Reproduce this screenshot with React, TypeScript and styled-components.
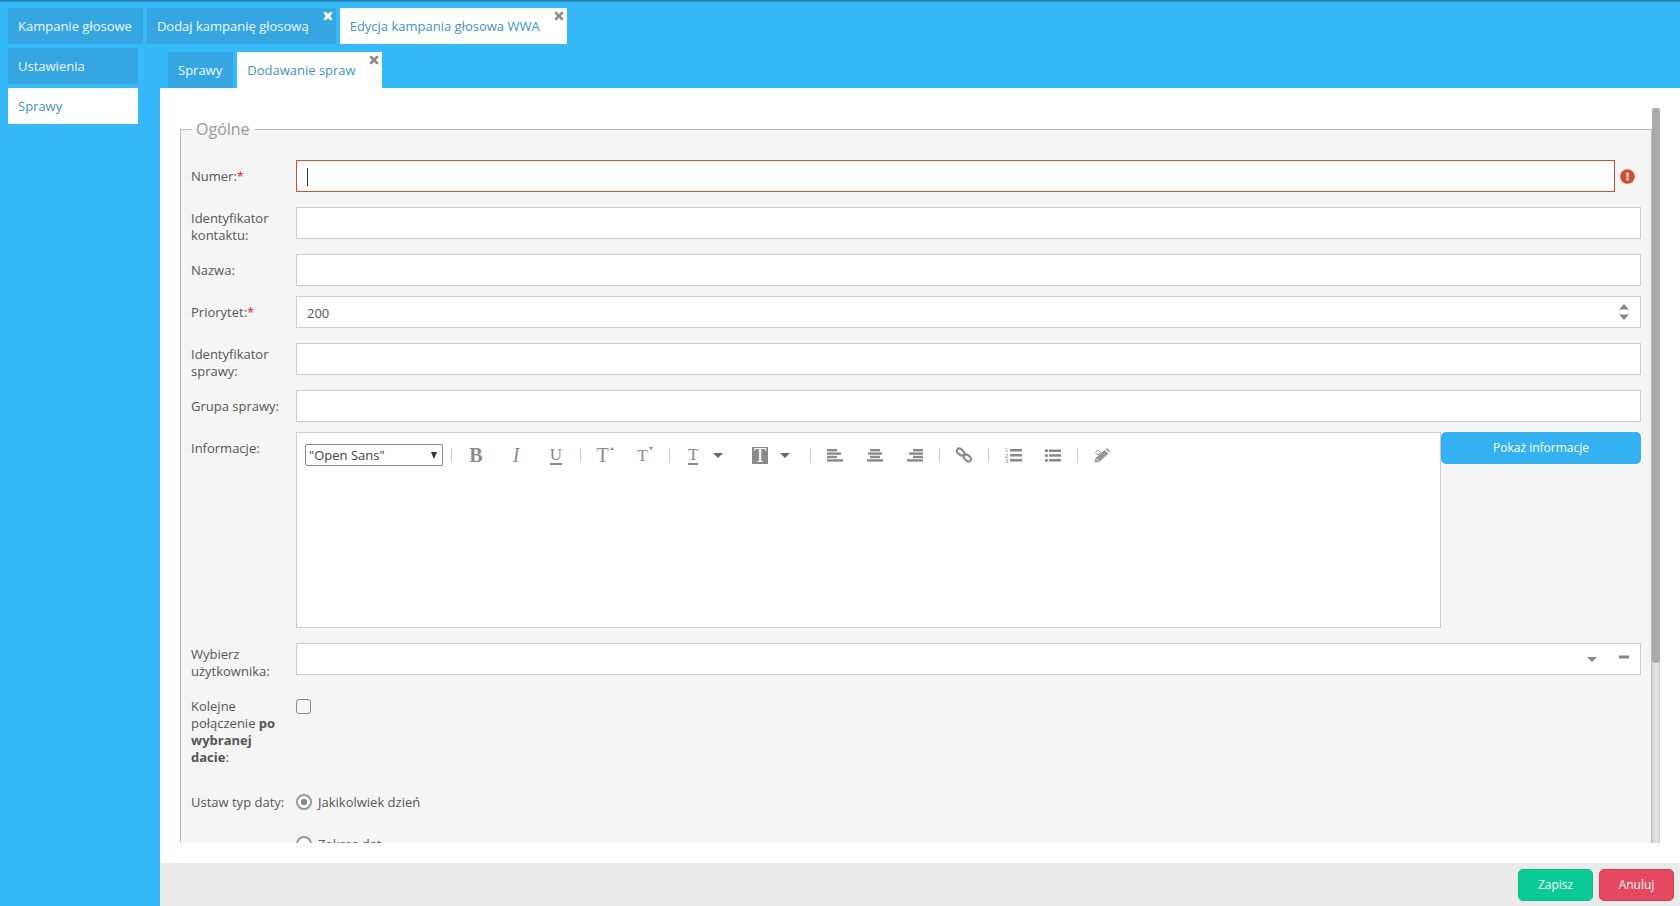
import React from "react";
import styled, { createGlobalStyle } from "styled-components";
import { FaTimes, FaExclamationCircle } from "react-icons/fa";

const GlobalStyle = createGlobalStyle`
  html, body {
    margin: 0;
    height: 100%;
    overflow: hidden;
  }
  * {
    box-sizing: border-box;
  }
  body {
    font-family: "Open Sans", "Liberation Sans", sans-serif;
    font-size: 13px;
    color: #555;
  }
`;

const Page = styled.div`
  width: 1680px;
  height: 906px;
  display: flex;
  flex-direction: column;
  background: #35b9f8;
`;

const TopStrip = styled.div`
  height: 2px;
  background: linear-gradient(#1f79a8, #2b9ad2);
`;

const TopTabs = styled.div`
  display: flex;
  gap: 4px;
  height: 42px;
  padding: 6px 0 0 8px;
`;

const Tab = styled.div<{ $active?: boolean; $closable?: boolean }>`
  position: relative;
  height: 36px;
  line-height: 36px;
  padding: 0 ${(p) => (p.$closable ? "27px" : "11px")} 0 10px;
  white-space: nowrap;
  background: ${(p) => (p.$active ? "#fff" : "#36a6e2")};
  color: ${(p) => (p.$active ? "#3f93c2" : "#eef8fd")};
`;

const SubTab = styled(Tab)`
  padding-right: ${(p) => (p.$closable ? "26px" : "11px")};
`;

const CloseMark = styled.span<{ $active?: boolean }>`
  position: absolute;
  top: 2px;
  right: 2px;
  display: flex;
  font-size: 12px;
  color: ${(p) => (p.$active ? "#8a8a8a" : "#fff")};
  svg {
    stroke: currentColor;
    stroke-width: 24;
  }
`;

const Body = styled.div`
  flex: 1;
  display: flex;
  min-height: 0;
`;

const Sidebar = styled.nav`
  width: 160px;
  flex: none;
  display: flex;
  flex-direction: column;
  gap: 4px;
  padding: 4px 22px 0 8px;
`;

const Main = styled.main`
  flex: 1;
  min-width: 0;
  display: flex;
  flex-direction: column;
`;

const SubTabs = styled.div`
  display: flex;
  gap: 4px;
  height: 44px;
  padding: 8px 0 0 8px;
`;

const Panel = styled.div`
  flex: 1;
  min-height: 0;
  display: flex;
  background: #fff;
  padding: 20px 20px 20px 0;
`;

const ScrollArea = styled.div`
  flex: 1;
  min-width: 0;
  height: 735px;
  padding: 10px 0 0 20px;
  overflow: hidden;
`;

const ScrollTrack = styled.div`
  width: 8px;
  height: 735px;
  flex: none;
  background: linear-gradient(90deg, #cfcfcf, #e6e6e6 50%, #cfcfcf);
`;

const ScrollThumb = styled.div`
  height: 555px;
  background: #aaa;
  border-radius: 4px;
`;

const Fieldset = styled.fieldset`
  margin: 0;
  padding: 20px 10px 0;
  min-width: 0;
  min-height: 963px;
  background: #f5f5f5;
  border: 1px solid #bbb;
`;

const Legend = styled.legend`
  padding: 0 5px;
  font-size: 16px;
  line-height: 22px;
  color: #999;
`;

const Row = styled.div<{ $gap?: number }>`
  display: flex;
  align-items: flex-start;
  margin-bottom: ${(p) => p.$gap ?? 15}px;
`;

const Label = styled.label<{ $tall?: boolean }>`
  width: 105px;
  flex: none;
  padding-top: ${(p) => (p.$tall ? "3px" : "8px")};
  margin-bottom: ${(p) => (p.$tall ? "-5px" : "0")};
  line-height: 17px;
  color: #555;
`;

const Required = styled.span`
  color: #e0201c;
`;

const Control = styled.div`
  position: relative;
  flex: 1;
  min-width: 0;
`;

const TextInput = styled.input<{ $invalid?: boolean }>`
  display: block;
  width: 100%;
  height: 32px;
  padding: 1px 10px 0;
  font: inherit;
  color: #555;
  background: #fff;
  outline: none;
  border: 1px solid ${(p) => (p.$invalid ? "#d64b30" : "#ccc")};
`;

const FakeCaret = styled.span`
  position: absolute;
  left: 11px;
  top: 8px;
  width: 1px;
  height: 18px;
  background: #333;
`;

const ErrorMark = styled.span`
  width: 26px;
  height: 32px;
  flex: none;
  display: flex;
  align-items: center;
  justify-content: flex-end;
  padding-right: 6px;
  font-size: 15px;
  color: #d64b30;
`;

const Spinner = styled.svg`
  position: absolute;
  right: 12px;
  top: 8px;
`;

const ComboArrows = styled.svg`
  position: absolute;
  right: 12px;
  top: 12px;
`;

const Editor = styled.div`
  flex: 1;
  height: 196px;
  padding: 11px 8px;
  background: #fff;
  border: 1px solid #ccc;
`;

const Toolbar = styled.div`
  display: flex;
  align-items: center;
  height: 22px;
`;

const FontPicker = styled.div`
  position: relative;
  width: 138px;
  height: 22px;
  flex: none;
`;

const FontSelect = styled.select`
  appearance: none;
  display: block;
  width: 100%;
  height: 100%;
  padding: 0 0 0 3px;
  font: inherit;
  color: #444;
  background: #fff;
  border: 1px solid #888;
  border-radius: 2px;
`;

const FontArrow = styled.span`
  position: absolute;
  right: 6px;
  top: 8px;
  width: 0;
  height: 0;
  border-left: 3px solid transparent;
  border-right: 3px solid transparent;
  border-top: 7px solid #333;
`;

const Separator = styled.span<{ $left?: number }>`
  width: 1px;
  height: 14px;
  flex: none;
  background: #ccc;
  margin: 0 4px 0 ${(p) => p.$left ?? 4}px;
`;

const ToolButton = styled.button`
  width: 40px;
  height: 22px;
  flex: none;
  display: flex;
  align-items: center;
  justify-content: center;
  padding: 0;
  background: none;
  border: none;
`;

const ColorButton = styled.button<{ $pad: number; $space: number }>`
  width: 66px;
  height: 22px;
  flex: none;
  display: flex;
  align-items: center;
  gap: ${(p) => p.$space}px;
  padding: 0 0 0 ${(p) => p.$pad}px;
  background: none;
  border: none;
`;

const Glyph = styled.span<{ $bold?: boolean; $italic?: boolean; $under?: boolean; $inverse?: boolean; $size?: number }>`
  display: inline-block;
  font-family: "Liberation Serif", serif;
  font-size: ${(p) => p.$size ?? 20}px;
  line-height: 17px;
  font-weight: ${(p) => (p.$bold ? 700 : 400)};
  font-style: ${(p) => (p.$italic ? "italic" : "normal")};
  color: ${(p) => (p.$inverse ? "#fff" : "#8a8a8a")};
  background: ${(p) => (p.$inverse ? "#8a8a8a" : "none")};
  padding: ${(p) => (p.$inverse ? "0 2px" : "0")};
  border-bottom: ${(p) => (p.$under ? "2px solid #8a8a8a" : "none")};
`;

const Sup = styled.span`
  align-self: flex-start;
  margin: 3px 0 0 1px;
  width: 0;
  height: 0;
  border-left: 2px solid transparent;
  border-right: 2px solid transparent;
`;

const SupUp = styled(Sup)`
  border-bottom: 3px solid #8a8a8a;
`;

const SupDown = styled(Sup)`
  border-top: 3px solid #8a8a8a;
`;

const Caret = styled.span`
  width: 0;
  height: 0;
  border-left: 5px solid transparent;
  border-right: 5px solid transparent;
  border-top: 5px solid #666;
`;

const ShowButton = styled.button`
  width: 200px;
  height: 32px;
  flex: none;
  padding: 0 0 2px;
  font: inherit;
  font-size: 12px;
  color: #fff;
  background: #33b1f1;
  border: none;
  border-radius: 5px;
`;

const Checkbox = styled.input`
  appearance: none;
  width: 15px;
  height: 15px;
  margin: 4px 0 0;
  background: transparent;
  border: 1px solid #888;
  border-radius: 3px;
`;

const RadioCaption = styled.span`
  width: 105px;
  flex: none;
  line-height: 16px;
`;

const RadioLine = styled.label`
  display: flex;
  align-items: center;
  gap: 6px;
  height: 16px;
`;

const Radio = styled.input`
  appearance: none;
  width: 16px;
  height: 16px;
  margin: 0;
  background: #fff;
  border: 2px solid #999;
  border-radius: 50%;
  &:checked {
    background: radial-gradient(circle, #888 0 3px, #fff 3.5px);
  }
`;

const Footer = styled.footer`
  height: 43px;
  flex: none;
  display: flex;
  justify-content: flex-end;
  align-items: center;
  gap: 6px;
  padding: 0 6px 0 0;
  background: #ebebeb;
`;

const FooterButton = styled.button<{ $danger?: boolean }>`
  width: 75px;
  height: 32px;
  font: inherit;
  font-size: 12px;
  color: #fff;
  background: ${(p) => (p.$danger ? "#e5485f" : "#0bcb95")};
  border: 1px solid ${(p) => (p.$danger ? "#d94058" : "#0abb8a")};
  border-radius: 5px;
`;

const AlignIcon = ({ mode }: { mode: "left" | "center" | "right" }) => {
  const widths = [10, 14, 10, 16];
  return (
    <svg width="16" height="13" viewBox="0 0 16 13" fill="#8a8a8a">
      {widths.map((w, i) => {
        const x = mode === "left" ? 0 : mode === "center" ? (16 - w) / 2 : 16 - w;
        return <rect key={i} x={x} y={i * 3.4} width={w} height="2.4" />;
      })}
    </svg>
  );
};

const LinkIcon = () => (
  <svg width="16" height="16" viewBox="0 0 16 16" fill="none" stroke="#8a8a8a" strokeWidth="2">
    <rect x="0.5" y="2.5" width="8" height="5" rx="2.5" transform="rotate(40 4.5 5)" />
    <rect x="7.5" y="8.5" width="8" height="5" rx="2.5" transform="rotate(40 11.5 11)" />
  </svg>
);

const OrderedIcon = () => (
  <svg width="17" height="16" viewBox="0 0 17 16" fill="#8a8a8a">
    <text x="0" y="5" fontSize="5.5" fontFamily="Liberation Sans">1</text>
    <text x="0" y="10.5" fontSize="5.5" fontFamily="Liberation Sans">2</text>
    <text x="0" y="16" fontSize="5.5" fontFamily="Liberation Sans">3</text>
    <rect x="5" y="2" width="12" height="2.5" />
    <rect x="5" y="7" width="12" height="2.5" />
    <rect x="5" y="12" width="12" height="2.5" />
  </svg>
);

const BulletIcon = () => (
  <svg width="16" height="13" viewBox="0 0 16 13" fill="#8a8a8a">
    <circle cx="1.5" cy="1.7" r="1.6" />
    <circle cx="1.5" cy="6.5" r="1.6" />
    <circle cx="1.5" cy="11.3" r="1.6" />
    <rect x="4" y="0.5" width="12" height="2.5" />
    <rect x="4" y="5.2" width="12" height="2.5" />
    <rect x="4" y="10" width="12" height="2.5" />
  </svg>
);

const PencilIcon = () => (
  <svg width="16" height="15" viewBox="0 0 16 15">
    <path d="M0.5 14.5 L1.5 10 L10.5 2 L14.5 5.5 L5 14 Z M11.5 1 L13 0 L16 3 L15.2 4.6 Z" fill="#999" />
    <path d="M1.5 4.5 L4 2 L6.5 4.5 L4 7 Z" fill="none" stroke="#999" />
    <path d="M2.5 11 L4.5 13" stroke="#fff" />
  </svg>
);

const App = () => (
  <Page>
    <GlobalStyle />
    <TopStrip />
    <TopTabs>
      <Tab>Kampanie głosowe</Tab>
      <Tab $closable>
        Dodaj kampanię głosową
        <CloseMark><FaTimes /></CloseMark>
      </Tab>
      <Tab $closable $active>
        Edycja kampania głosowa WWA
        <CloseMark $active><FaTimes /></CloseMark>
      </Tab>
    </TopTabs>
    <Body>
      <Sidebar>
        <Tab>Ustawienia</Tab>
        <Tab $active>Sprawy</Tab>
      </Sidebar>
      <Main>
        <SubTabs>
          <SubTab>Sprawy</SubTab>
          <SubTab $closable $active>
            Dodawanie spraw
            <CloseMark $active><FaTimes /></CloseMark>
          </SubTab>
        </SubTabs>
        <Panel>
          <ScrollArea>
            <Fieldset>
              <Legend>Ogólne</Legend>
              <Row>
                <Label>Numer:<Required>*</Required></Label>
                <Control>
                  <TextInput $invalid />
                  <FakeCaret />
                </Control>
                <ErrorMark><FaExclamationCircle /></ErrorMark>
              </Row>
              <Row>
                <Label $tall>Identyfikator<br />kontaktu:</Label>
                <Control><TextInput /></Control>
              </Row>
              <Row $gap={10}>
                <Label>Nazwa:</Label>
                <Control><TextInput /></Control>
              </Row>
              <Row>
                <Label>Priorytet:<Required>*</Required></Label>
                <Control>
                  <TextInput defaultValue="200" />
                  <Spinner width="10" height="16" viewBox="0 0 10 16" fill="#888">
                    <path d="M5 0 L10 5.5 H0 Z" />
                    <path d="M0 10.5 H10 L5 16 Z" />
                  </Spinner>
                </Control>
              </Row>
              <Row>
                <Label $tall>Identyfikator<br />sprawy:</Label>
                <Control><TextInput /></Control>
              </Row>
              <Row $gap={10}>
                <Label>Grupa sprawy:</Label>
                <Control><TextInput /></Control>
              </Row>
              <Row>
                <Label>Informacje:</Label>
                <Editor>
                  <Toolbar>
                    <FontPicker>
                      <FontSelect defaultValue="open">
                        <option value="open">"Open Sans"</option>
                      </FontSelect>
                      <FontArrow />
                    </FontPicker>
                    <Separator $left={8} />
                    <ToolButton><Glyph $bold>B</Glyph></ToolButton>
                    <ToolButton><Glyph $italic>I</Glyph></ToolButton>
                    <ToolButton><Glyph $under $size={17}>U</Glyph></ToolButton>
                    <Separator />
                    <ToolButton><Glyph>T</Glyph><SupUp /></ToolButton>
                    <ToolButton><Glyph $size={17}>T</Glyph><SupDown /></ToolButton>
                    <Separator />
                    <ColorButton $pad={14} $space={15}><Glyph $under $size={17}>T</Glyph><Caret /></ColorButton>
                    <ColorButton $pad={12} $space={12}><Glyph $inverse>T</Glyph><Caret /></ColorButton>
                    <Separator />
                    <ToolButton><AlignIcon mode="left" /></ToolButton>
                    <ToolButton><AlignIcon mode="center" /></ToolButton>
                    <ToolButton><AlignIcon mode="right" /></ToolButton>
                    <Separator />
                    <ToolButton><LinkIcon /></ToolButton>
                    <Separator />
                    <ToolButton><OrderedIcon /></ToolButton>
                    <ToolButton><BulletIcon /></ToolButton>
                    <Separator />
                    <ToolButton><PencilIcon /></ToolButton>
                  </Toolbar>
                </Editor>
                <ShowButton>Pokaż informacje</ShowButton>
              </Row>
              <Row $gap={20}>
                <Label $tall>Wybierz<br />użytkownika:</Label>
                <Control>
                  <TextInput />
                  <ComboArrows width="42" height="8" viewBox="0 0 42 8" fill="#888">
                    <path d="M0 2 H10 L5 7 Z" />
                    <rect x="32" y="0.5" width="10" height="3" />
                  </ComboArrows>
                </Control>
              </Row>
              <Row $gap={33}>
                <Label $tall>
                  Kolejne<br />połączenie <b>po</b><br /><b>wybranej</b><br /><b>dacie</b>:
                </Label>
                <Checkbox type="checkbox" />
              </Row>
              <Row $gap={26}>
                <RadioCaption>Ustaw typ daty:</RadioCaption>
                <RadioLine>
                  <Radio type="radio" name="date-type" defaultChecked />
                  Jakikolwiek dzień
                </RadioLine>
              </Row>
              <Row>
                <RadioCaption />
                <RadioLine>
                  <Radio type="radio" name="date-type" />
                  Zakres dat
                </RadioLine>
              </Row>
            </Fieldset>
          </ScrollArea>
          <ScrollTrack>
            <ScrollThumb />
          </ScrollTrack>
        </Panel>
        <Footer>
          <FooterButton>Zapisz</FooterButton>
          <FooterButton $danger>Anuluj</FooterButton>
        </Footer>
      </Main>
    </Body>
  </Page>
);

export default App;
